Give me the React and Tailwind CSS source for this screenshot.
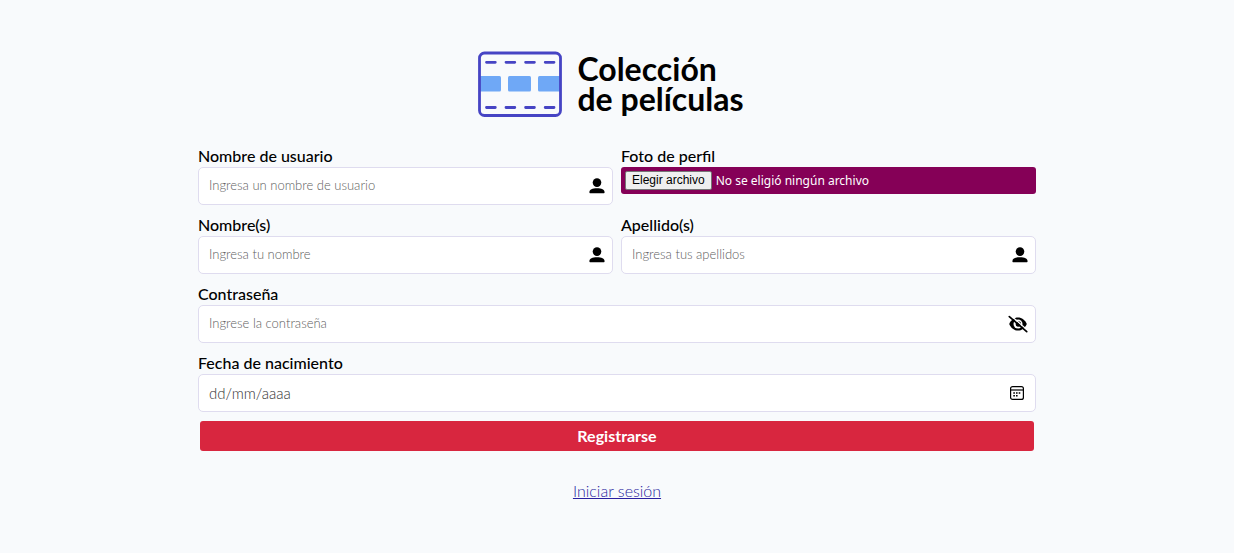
import React from "react";

function FilmLogo() {
  return (
    <svg width="84" height="66" viewBox="0 0 84 66" fill="none" aria-hidden="true">
      <g fill="#6fa8f6">
        <path d="M2 25h19.500a1.500 1.500 0 0 1 1.500 1.500v12.500a1.500 1.500 0 0 1-1.500 1.500H2z" />
        <rect x="30" y="25" width="23" height="15.500" rx="1.500" />
        <path d="M82 25H61.500a1.500 1.500 0 0 0-1.500 1.500v12.500a1.500 1.500 0 0 0 1.500 1.500H82z" />
      </g>
      <rect x="1.500" y="2" width="81" height="62.500" rx="5" stroke="#4644c4" strokeWidth="2.800" />
      <path
        d="M8.500 11.300h8.800M28 11.300h8.800M47.600 11.300h8.800M67.200 11.300h8.800M8.500 56.500h8.800M28 56.500h8.800M47.600 56.500h8.800M67.200 56.500h8.800"
        stroke="#4644c4"
        strokeWidth="2.800"
        strokeLinecap="round"
      />
    </svg>
  );
}

function PersonIcon() {
  return (
    <svg width="16" height="16" viewBox="0 0 16 16" fill="currentColor" aria-hidden="true">
      <circle cx="8" cy="4.600" r="4.300" />
      <path d="M0.400 14.300C0.400 11.300 3.400 10.200 8 10.200s7.600 1.100 7.600 4.100c0 .7-.4 1-1 1h-13.200c-.6 0-1-.3-1-1z" />
    </svg>
  );
}

function HiddenEyeIcon() {
  return (
    <svg width="20" height="18" viewBox="0 0 20 18" fill="none" aria-hidden="true">
      <path
        d="M1.200 9C3 4.800 6.200 2.400 10 2.400S17 4.800 18.800 9C17 13.200 13.800 15.600 10 15.600S3 13.200 1.200 9z"
        fill="currentColor"
      />
      <circle cx="10" cy="9" r="4.500" fill="#fff" />
      <circle cx="10.300" cy="9" r="2.700" fill="currentColor" />
      <path d="M2.500 0.300L19.500 15.300" stroke="#fff" strokeWidth="1.300" />
      <path d="M1.300 1.600L18.700 16.600" stroke="currentColor" strokeWidth="1.700" strokeLinecap="round" />
    </svg>
  );
}

function CalendarIcon() {
  return (
    <svg width="14" height="14" viewBox="0 0 14 14" fill="none" aria-hidden="true">
      <rect x="0.600" y="0.600" width="12.800" height="12.800" rx="2" stroke="currentColor" strokeWidth="1.200" />
      <path d="M0.600 4h12.800" stroke="currentColor" strokeWidth="1.200" />
      <path
        d="M6 6.200h1.600v1.600H6zM8.700 6.200h1.600v1.600H8.700zM3.300 6.200h1.600v1.600H3.300zM3.300 8.900h1.600v1.600H3.300zM6 8.900h1.600v1.600H6z"
        fill="currentColor"
      />
    </svg>
  );
}

function Field({ id, label, type = "text", placeholder, hint = "placeholder:text-[#606060]", size = "text-[13px]", wide, children }) {
  return (
    <div className={wide ? "sm:col-span-2" : ""}>
      <label htmlFor={id} className="block pb-[2px] text-base leading-[18px] font-medium">
        {label}
      </label>
      <div className="flex h-[38px] items-center rounded-[5px] border border-[#dfdcef] bg-white pr-[7px] pl-[10px]">
        <input
          id={id}
          type={type}
          placeholder={placeholder}
          className={`min-w-0 flex-1 bg-transparent font-light outline-none ${size} ${hint}`}
        />
        {children}
      </div>
    </div>
  );
}

export default function App() {
  return (
    <main className="min-h-screen bg-[#f8fafc] px-4 pt-[51px] pb-10 font-['Lato','Open_Sans',sans-serif] text-black">
      <header className="flex items-center justify-center gap-[15px] pr-3">
        <FilmLogo />
        <h1 className="text-[32px] leading-[30px] font-bold">
          Colección
          <br />
          de películas
        </h1>
      </header>

      <form className="mx-auto mt-[30px] w-full max-w-[838px]" onSubmit={(event) => event.preventDefault()}>
        <div className="grid gap-x-2 gap-y-[11px] sm:grid-cols-2">
          <Field id="usuario" label="Nombre de usuario" placeholder="Ingresa un nombre de usuario">
            <PersonIcon />
          </Field>

          <div>
            <label htmlFor="foto" className="block pb-[2px] text-base leading-[18px] font-medium">
              Foto de perfil
            </label>
            <label
              htmlFor="foto"
              className="relative flex h-[27px] items-center gap-1 rounded-[3px] bg-[#850057] px-1 text-white"
            >
              <input id="foto" type="file" className="sr-only" />
              <span className="rounded-[2px] border border-[#767676] bg-[#efefef] px-[6px] font-['Liberation_Sans',sans-serif] text-[12px] leading-[17px] text-black">
                Elegir archivo
              </span>
              <span className="font-['Noto_Sans',sans-serif] text-[12px] font-normal">No se eligió ningún archivo</span>
            </label>
          </div>

          <Field id="nombre" label="Nombre(s)" placeholder="Ingresa tu nombre">
            <PersonIcon />
          </Field>
          <Field id="apellido" label="Apellido(s)" placeholder="Ingresa tus apellidos">
            <PersonIcon />
          </Field>
          <Field id="contrasena" label="Contraseña" type="password" placeholder="Ingrese la contraseña" wide>
            <button type="button" aria-label="Mostrar contraseña">
              <HiddenEyeIcon />
            </button>
          </Field>
          <Field
            id="nacimiento"
            label="Fecha de nacimiento"
            placeholder="dd/mm/aaaa"
            hint="placeholder:text-[#333333]"
            size="text-[15px]"
            wide
          >
            <button type="button" aria-label="Abrir calendario" className="mr-1">
              <CalendarIcon />
            </button>
          </Field>
        </div>

        <div className="px-[2px] pt-[9px]">
          <button
            type="submit"
            className="h-[30px] w-full rounded-[3px] bg-[#d8263f] text-base leading-5 font-bold text-white"
          >
            Registrarse
          </button>
        </div>
      </form>

      <p className="mt-[30px] text-center text-base leading-5">
        <a href="#iniciar-sesion" className="font-light text-[#2a1fa0] underline">
          Iniciar sesión
        </a>
      </p>
    </main>
  );
}
